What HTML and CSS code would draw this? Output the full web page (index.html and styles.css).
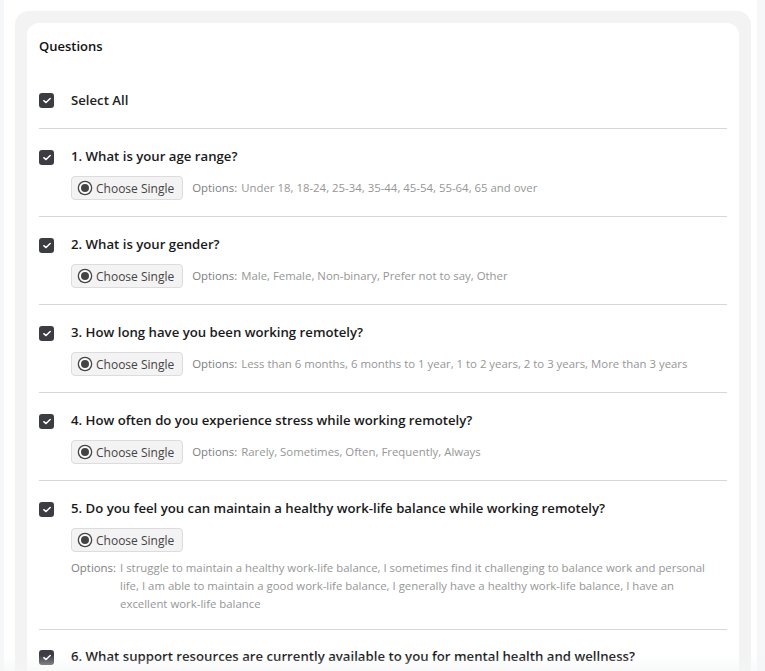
FILE: index.html
```html
<!DOCTYPE html>
<html lang="en">
<head>
    <meta charset="UTF-8">
    <meta name="viewport" content="width=device-width, initial-scale=1.0">
    <title>Questions</title>
    <link rel="stylesheet" href="styles.css">
</head>
<body>

    <div class="page">
        <div class="panel">
            <div class="card">
                <h3 class="card-title">Questions</h3>

                <!-- Select all -->
                <div class="select-all">
                    <span class="check"><svg viewBox="0 0 10 8" width="8" height="7"><path d="M1 4.2 L3.8 6.6 L9 1.4" fill="none" stroke="#fff" stroke-width="1.8" stroke-linecap="round" stroke-linejoin="round"/></svg></span>
                    <span class="select-label">Select All</span>
                </div>

                <!-- Lista de preguntas -->
                <div class="question">
                    <span class="check"><svg viewBox="0 0 10 8" width="8" height="7"><path d="M1 4.2 L3.8 6.6 L9 1.4" fill="none" stroke="#fff" stroke-width="1.8" stroke-linecap="round" stroke-linejoin="round"/></svg></span>
                    <div class="question-body">
                        <div class="question-title">1. What is your age range?</div>
                        <div class="question-meta">
                            <span class="type-btn"><span class="radio"></span>Choose Single</span>
                            <div class="options"><span class="options-label">Options:</span><span class="options-text">Under 18, 18-24, 25-34, 35-44, 45-54, 55-64, 65 and over</span></div>
                        </div>
                    </div>
                </div>

                <div class="question">
                    <span class="check"><svg viewBox="0 0 10 8" width="8" height="7"><path d="M1 4.2 L3.8 6.6 L9 1.4" fill="none" stroke="#fff" stroke-width="1.8" stroke-linecap="round" stroke-linejoin="round"/></svg></span>
                    <div class="question-body">
                        <div class="question-title">2. What is your gender?</div>
                        <div class="question-meta">
                            <span class="type-btn"><span class="radio"></span>Choose Single</span>
                            <div class="options"><span class="options-label">Options:</span><span class="options-text">Male, Female, Non-binary, Prefer not to say, Other</span></div>
                        </div>
                    </div>
                </div>

                <div class="question">
                    <span class="check"><svg viewBox="0 0 10 8" width="8" height="7"><path d="M1 4.2 L3.8 6.6 L9 1.4" fill="none" stroke="#fff" stroke-width="1.8" stroke-linecap="round" stroke-linejoin="round"/></svg></span>
                    <div class="question-body">
                        <div class="question-title">3. How long have you been working remotely?</div>
                        <div class="question-meta">
                            <span class="type-btn"><span class="radio"></span>Choose Single</span>
                            <div class="options"><span class="options-label">Options:</span><span class="options-text">Less than 6 months, 6 months to 1 year, 1 to 2 years, 2 to 3 years, More than 3 years</span></div>
                        </div>
                    </div>
                </div>

                <div class="question">
                    <span class="check"><svg viewBox="0 0 10 8" width="8" height="7"><path d="M1 4.2 L3.8 6.6 L9 1.4" fill="none" stroke="#fff" stroke-width="1.8" stroke-linecap="round" stroke-linejoin="round"/></svg></span>
                    <div class="question-body">
                        <div class="question-title">4. How often do you experience stress while working remotely?</div>
                        <div class="question-meta">
                            <span class="type-btn"><span class="radio"></span>Choose Single</span>
                            <div class="options"><span class="options-label">Options:</span><span class="options-text">Rarely, Sometimes, Often, Frequently, Always</span></div>
                        </div>
                    </div>
                </div>

                <div class="question">
                    <span class="check"><svg viewBox="0 0 10 8" width="8" height="7"><path d="M1 4.2 L3.8 6.6 L9 1.4" fill="none" stroke="#fff" stroke-width="1.8" stroke-linecap="round" stroke-linejoin="round"/></svg></span>
                    <div class="question-body">
                        <div class="question-title">5. Do you feel you can maintain a healthy work-life balance while working remotely?</div>
                        <div class="question-meta">
                            <span class="type-btn"><span class="radio"></span>Choose Single</span>
                            <div class="options"><span class="options-label">Options:</span><span class="options-text">I struggle to maintain a healthy work-life balance, I sometimes find it challenging to balance work and personal life, I am able to maintain a good work-life balance, I generally have a healthy work-life balance, I have an excellent work-life balance</span></div>
                        </div>
                    </div>
                </div>

                <div class="question last">
                    <span class="check"><svg viewBox="0 0 10 8" width="8" height="7"><path d="M1 4.2 L3.8 6.6 L9 1.4" fill="none" stroke="#fff" stroke-width="1.8" stroke-linecap="round" stroke-linejoin="round"/></svg></span>
                    <div class="question-body">
                        <div class="question-title">6. What support resources are currently available to you for mental health and wellness?</div>
                    </div>
                </div>
            </div>
        </div>
    </div>

    <div class="bottom-fade"></div>

</body>
</html>
```

FILE: styles.css
```css
/* Estilos generales */
body {
    font-family: "Open Sans", "Noto Sans", Arial, sans-serif;
    margin: 0;
    padding: 0;
    background-color: #fff;
    color: #222;
    overflow: hidden;
}
.page {
    padding: 11px 14px 0 15px;
    border-left: 4px solid #f6f7f8;
    border-right: 8px solid #f6f7f8;
}
.panel {
    background-color: #f3f3f3;
    border-radius: 14px 14px 0 0;
    padding: 12px 12px 0 12px;
    margin-left: -4px;
    margin-right: -8px;
}
.card {
    background-color: #fff;
    border-radius: 12px 12px 0 0;
    padding: 13px 12px 40px 12px;
}
.card-title {
    margin: 0 0 18px 0;
    font-size: 13px;
    font-weight: 600;
    line-height: 20px;
    color: #111;
}
.check {
    flex: none;
    width: 15px;
    height: 15px;
    border-radius: 3px;
    background-color: #3c3d43;
    display: flex;
    align-items: center;
    justify-content: center;
}
.select-all {
    display: flex;
    align-items: center;
    gap: 17px;
    padding: 16px 0 18px 0;
    border-bottom: 1px solid #d6d6d6;
}
.select-label {
    font-size: 13.2px;
    font-weight: 600;
    line-height: 20px;
}
.question {
    display: flex;
    align-items: flex-start;
    gap: 17px;
    padding: 17px 0 16px 0;
    border-bottom: 1px solid #d6d6d6;
}
.question.last {
    border-bottom: none;
    padding-top: 16px;
}
.question .check {
    margin-top: 4px;
}
.question-body {
    flex: 1;
    min-width: 0;
}
.question-title {
    font-size: 13.2px;
    font-weight: 600;
    line-height: 20px;
    color: #1a1a1a;
}
.question-meta {
    display: flex;
    flex-wrap: wrap;
    align-items: center;
    column-gap: 9px;
    row-gap: 7px;
    margin-top: 10px;
}
.type-btn {
    display: inline-flex;
    align-items: center;
    gap: 5px;
    height: 22px;
    padding: 0 8px 0 7px;
    background-color: #f3f3f3;
    border: 1px solid #dcdcdc;
    border-radius: 4px;
    font-size: 12px;
    font-weight: 500;
    color: #444;
}
.radio {
    width: 8px;
    height: 8px;
    border-radius: 50%;
    background-color: #444;
    border: 2px solid #fff;
    box-shadow: 0 0 0 1.3px #444;
}
.options {
    display: flex;
    gap: 4px;
    padding-right: 16px;
    font-size: 11.4px;
    line-height: 18px;
    color: #969696;
}
.options-label {
    flex: none;
    color: #7e7e7e;
}
.bottom-fade {
    position: fixed;
    left: 0;
    right: 0;
    bottom: 0;
    height: 16px;
    background: linear-gradient(to bottom, rgba(244, 245, 246, 0), rgba(244, 245, 246, 0.6));
    pointer-events: none;
}
```
